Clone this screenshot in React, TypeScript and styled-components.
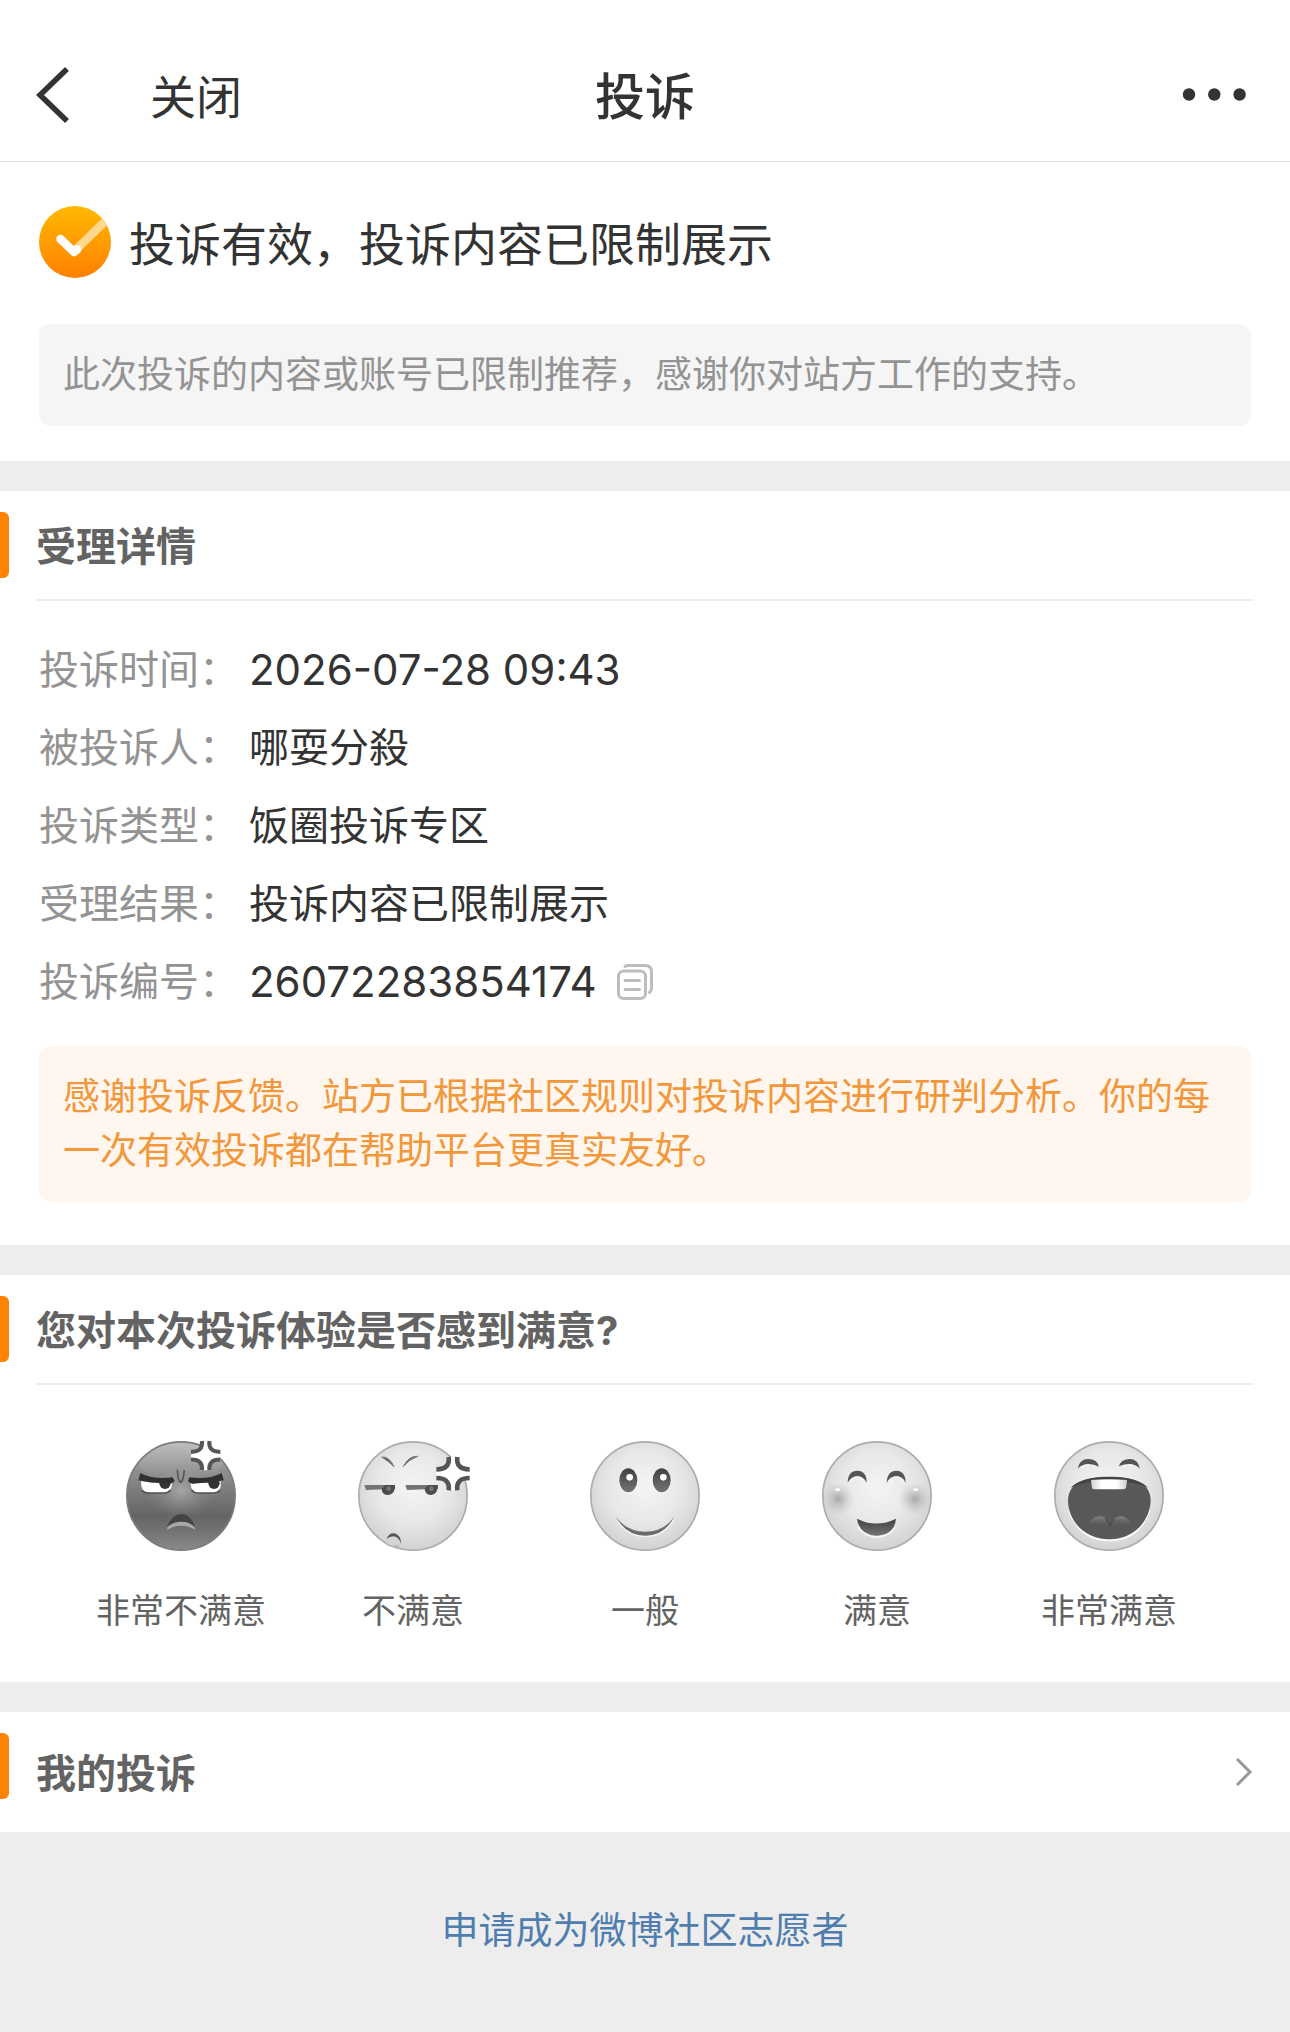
import React from 'react';
import styled, { createGlobalStyle } from 'styled-components';

const GlobalStyle = createGlobalStyle`
  *, *::before, *::after { box-sizing: border-box; }
  body {
    margin: 0;
    background: #ededed;
    color: #333;
    font-family: Inter, "Noto Sans CJK SC", sans-serif;
    font-size: 40px;
  }
  button { padding: 0; border: 0; background: none; color: inherit; font: inherit; cursor: pointer; }
  h1, h2, p, dl, dd, fieldset { margin: 0; padding: 0; border: 0; }
  svg { display: block; flex: none; overflow: visible; }
`;

const Page = styled.div`
  display: flex;
  flex-direction: column;
`;

const TopBar = styled.header`
  display: grid;
  grid-template-columns: 1fr auto 1fr;
  align-items: center;
  padding: 28px 36px 0;
  height: 162px;
  background: #fff;
  border-bottom: 1px solid #e0e0e0;
`;

const TopBarStart = styled.div`
  display: flex;
  align-items: center;
  gap: 80px;
`;

const CloseButton = styled.button`
  padding-top: 4px;
  font-size: 46px;
  line-height: 60px;
`;

const PageTitle = styled.h1`
  padding-top: 4px;
  font-size: 50px;
  font-weight: 500;
  line-height: 60px;
`;

const MoreButton = styled.button`
  justify-self: end;
`;

const Section = styled.section`
  margin-bottom: 30px;
  background: #fff;

  &:last-of-type { margin-bottom: 0; }
`;

const StatusSection = styled(Section)`
  padding: 44px 39px 35px;
`;

const StatusRow = styled.div`
  display: flex;
  align-items: center;
  gap: 18px;
  margin-bottom: 46px;
`;

const StatusText = styled.p`
  padding-top: 4px;
  font-size: 46px;
  line-height: 60px;
`;

const Notice = styled.p<{ $tone: 'neutral' | 'warm' }>`
  padding: 24px;
  border-radius: 12px;
  font-size: 37px;
  line-height: 54px;
  color: ${p => (p.$tone === 'warm' ? '#f2973a' : '#939393')};
  background: ${p => (p.$tone === 'warm' ? '#fff6ef' : '#f5f5f5')};
`;

const Marker = styled.span`
  align-self: flex-start;
  width: 9px;
  height: 66px;
  margin: 21px 27px 0 0;
  border-radius: 0 6px 6px 0;
  background: #ff8200;
`;

const SectionHead = styled.div`
  display: flex;
  align-items: center;
  height: 108px;
`;

const SectionTitle = styled.h2`
  padding-top: 4px;
  font-size: 40px;
  font-weight: 700;
  line-height: 60px;
  color: #636363;
`;

const Rule = styled.hr`
  height: 2px;
  margin: 0 36px;
  border: 0;
  background: #eee;
`;

const Details = styled.div`
  padding: 30px 39px 43px;
`;

const FieldList = styled.dl`
  margin-bottom: 25px;
`;

const Field = styled.div`
  display: flex;
  align-items: center;
  gap: 10px;
  line-height: 78px;
`;

const FieldName = styled.dt`
  width: 200px;
  color: #939393;
`;

const FieldValue = styled.dd<{ $numeric?: boolean }>`
  display: flex;
  align-items: center;
  gap: 20px;
  font-size: ${p => (p.$numeric ? 42 : 40)}px;
`;

const Ratings = styled.fieldset`
  display: grid;
  grid-template-columns: repeat(5, 1fr);
  padding: 56px 65px 47px;
`;

const Rating = styled.label`
  display: flex;
  flex-direction: column;
  align-items: center;
  gap: 36px;
  font-size: 34px;
  line-height: 48px;
  color: #636363;
  cursor: pointer;
`;

const RatingInput = styled.input`
  position: absolute;
  width: 1px;
  height: 1px;
  margin: 0;
  opacity: 0;
`;

const LinkRow = styled.a`
  display: flex;
  align-items: center;
  height: 120px;
  padding-right: 38px;
  text-decoration: none;

  svg { margin-left: auto; }
`;

const Footer = styled.footer`
  display: flex;
  justify-content: center;
  padding: 72px 39px;
`;

const FooterLink = styled.a`
  font-size: 37px;
  line-height: 54px;
  color: #507daf;
  text-decoration: none;
`;

const SharedDefs = styled.svg`
  position: absolute;
`;

const BackIcon = () => (
  <svg width="34" height="58" viewBox="0 0 34 58" fill="none" stroke="#333" strokeWidth="5.5">
    <path d="M31 3 4 29l27 26" />
  </svg>
);

const MoreIcon = () => (
  <svg width="72" height="14" viewBox="0 0 72 14" fill="#333">
    <circle cx="7" cy="6.5" r="6.2" />
    <circle cx="32.3" cy="6.5" r="6.2" />
    <circle cx="57.6" cy="6.5" r="6.2" />
  </svg>
);

const CheckIcon = () => (
  <svg width="72" height="72" viewBox="0 0 72 72">
    <defs>
      <linearGradient id="badge" x1="0" y1="0" x2="0" y2="1">
        <stop offset="0" stopColor="#ffb900" />
        <stop offset="1" stopColor="#ff8000" />
      </linearGradient>
      <clipPath id="badgeClip"><circle cx="36" cy="36" r="36" /></clipPath>
    </defs>
    <circle cx="36" cy="36" r="36" fill="url(#badge)" />
    <g clipPath="url(#badgeClip)" fill="none" strokeWidth="8.500">
      <path d="M37 43.500 70 11.500" stroke="#ffd890" />
      <path d="M21.500 33 35 46l3-2.500" stroke="#fff" strokeLinecap="round" strokeLinejoin="round" />
    </g>
  </svg>
);

const CopyIcon = () => (
  <svg width="36" height="36" viewBox="0 0 36 36" fill="none" stroke="#bdbdbd" strokeWidth="3" strokeLinecap="round">
    <rect x="1.5" y="7" width="27" height="27.5" rx="5" />
    <path d="M8 2.500Q9.500 1.500 12 1.500h16q6.500 0 6.500 6.500v16q0 3-2 4.500M8 16.500h14.500M8 25.500h14.500" />
  </svg>
);

const ArrowIcon = () => (
  <svg width="17" height="30" viewBox="0 0 17 30" fill="none" stroke="#999" strokeWidth="3">
    <path d="M2 2 15 15 2 28" />
  </svg>
);

const FaceDefs = () => (
  <SharedDefs width="0" height="0" aria-hidden="true">
    <defs>
      <radialGradient id="light" cx="0.5" cy="0.42" r="0.6">
        <stop offset="0" stopColor="#f4f4f4" />
        <stop offset="0.55" stopColor="#e8e8e8" />
        <stop offset="1" stopColor="#d0d0d0" />
      </radialGradient>
      <linearGradient id="dark" x1="0" y1="0" x2="0" y2="1">
        <stop offset="0" stopColor="#a9a9a9" />
        <stop offset="0.3" stopColor="#8c8c8c" />
        <stop offset="0.68" stopColor="#646464" />
        <stop offset="0.85" stopColor="#767676" />
        <stop offset="1" stopColor="#8a8a8a" />
      </linearGradient>
      <radialGradient id="darkGlow">
        <stop offset="0" stopColor="#b4b4b4" stopOpacity="0.75" />
        <stop offset="1" stopColor="#8c8c8c" stopOpacity="0" />
      </radialGradient>
      <linearGradient id="gloss" x1="0" y1="0" x2="0" y2="1">
        <stop offset="0" stopColor="#d0d0d0" stopOpacity="0.55" />
        <stop offset="1" stopColor="#b0b0b0" stopOpacity="0" />
      </linearGradient>
      <linearGradient id="ink" x1="0" y1="0" x2="0" y2="1">
        <stop offset="0" stopColor="#404040" />
        <stop offset="1" stopColor="#747474" />
      </linearGradient>
      <radialGradient id="blush">
        <stop offset="0" stopColor="#a2a2a2" stopOpacity="0.9" />
        <stop offset="1" stopColor="#c8c8c8" stopOpacity="0" />
      </radialGradient>
      <linearGradient id="tooth" x1="0" y1="0" x2="1" y2="0">
        <stop offset="0" stopColor="#d0d0d0" />
        <stop offset="0.3" stopColor="#fff" />
        <stop offset="0.7" stopColor="#fff" />
        <stop offset="1" stopColor="#d0d0d0" />
      </linearGradient>
      <linearGradient id="tongue" x1="0" y1="0" x2="0" y2="1">
        <stop offset="0" stopColor="#858585" />
        <stop offset="1" stopColor="#5c5c5c" stopOpacity="0" />
      </linearGradient>
      <clipPath id="head"><circle cx="165" cy="165" r="160" /></clipPath>
    </defs>
  </SharedDefs>
);

/* All faces share a 330-unit canvas with the head filling it. */
const Face = ({ dark = false, children }: { dark?: boolean; children: React.ReactNode }) => (
  <svg width="110" height="110" viewBox="0 0 330 330" fill="none" aria-hidden="true">
    <circle cx="165" cy="165" r="162.500" fill={dark ? 'url(#dark)' : 'url(#light)'} stroke={dark ? '#7c7c7c' : '#acacac'} strokeWidth="5" />
    {children}
  </svg>
);

const AngerMark = ({ x, y, size }: { x: number; y: number; size: number }) => (
  <g transform={`translate(${x} ${y}) scale(${size / 100})`}>
    <path d="M31 0H69L67 14Q71 31 100 33V67Q71 69 67 86L69 100H31L33 86Q29 69 0 67V33Q29 31 33 14Z" fill="#fff" />
    <g stroke="#555" strokeWidth="14">
      <path d="M37 0Q42 37 0 37M63 0Q58 37 100 37M37 100Q42 63 0 63M63 100Q58 63 100 63" />
    </g>
  </g>
);

const FuriousFace = () => (
  <Face dark>
    <ellipse cx="165" cy="150" rx="105" ry="85" fill="url(#darkGlow)" />
    <ellipse cx="165" cy="62" rx="128" ry="56" fill="url(#gloss)" clipPath="url(#head)" />
    <path d="M154 86Q156 122 164 124Q172 120 175 88" stroke="#555" strokeWidth="5" />
    <path d="M45 120Q90 130 138 124Q138 154 116 156H66Q44 154 45 120Z" fill="#fff" />
    <path d="M194 124Q240 130 284 120Q288 154 264 156H216Q194 154 194 124Z" fill="#fff" />
    <path d="M48 147Q54 156 68 156H114Q126 156 134 147M196 147Q203 156 216 156H262Q274 156 283 147" stroke="#505050" strokeWidth="5" />
    <circle cx="117" cy="127" r="17" fill="#333" />
    <circle cx="264" cy="127" r="17" fill="#333" />
    <path d="M43 96Q78 116 140 109L146 120Q136 132 112 127Q70 125 37 118Z" fill="#303030" />
    <path d="M287 96Q252 116 190 109L186 120Q194 132 216 127Q260 125 293 118Z" fill="#303030" />
    <path d="M123 257Q138 220 166 219Q195 220 207 257Q190 247 166 246Q140 247 123 257Z" fill="#444" />
    <path d="M124 259Q140 242 166 242Q192 242 206 259V266Q190 254 166 254Q140 254 124 267Z" fill="#a8a8a8" />
    <AngerMark x={195} y={0} size={88} />
  </Face>
);

const AnnoyedFace = () => (
  <Face>
    <path d="M71 48Q94 46 108 77Q92 61 71 48ZM179 46Q154 43 136 76Q152 56 179 46Z" fill="#666" stroke="#777" strokeWidth="3" />
    <path d="M19 132H111V143L24 147ZM142 132H240V143L147 147Z" fill="#747474" />
    <path d="M71 143Q72 162 91 162Q112 160 111 132H82ZM200 143Q202 162 220 162Q240 160 239 132H211Z" fill="#4c4c4c" />
    <circle cx="92" cy="143" r="7" fill="#777" />
    <circle cx="220" cy="143" r="7" fill="#777" />
    <path d="M86 298Q90 277 109 277Q128 280 130 310Q124 319 108 318Q88 320 83 307Z" fill="#d4d4d4" />
    <path d="M86 294Q92 276 109 277Q128 281 130 310Q122 286 106 286Q94 286 86 294Z" fill="#555" />
    <path d="M84 306Q95 320 124 314" stroke="#b8b8b8" strokeWidth="5" />
    <AngerMark x={235} y={48} size={100} />
  </Face>
);

const NeutralFace = () => (
  <Face>
    <ellipse cx="115" cy="121" rx="28" ry="37" fill="#f8f8f8" />
    <ellipse cx="215" cy="121" rx="28" ry="37" fill="#f8f8f8" />
    <ellipse cx="115" cy="118" rx="27" ry="36" fill="url(#ink)" />
    <ellipse cx="215" cy="118" rx="27" ry="36" fill="url(#ink)" />
    <circle cx="119" cy="109" r="10" fill="#fff" />
    <circle cx="220" cy="109" r="10" fill="#fff" />
    <path d="M83 238Q112 286 166 286T250 238" stroke="#f8f8f8" strokeWidth="4" />
    <path d="M78 228Q110 272 166 272T252 228Q224 284 166 284T78 228Z" fill="#6c6c6c" />
  </Face>
);

const HappyFace = () => (
  <Face>
    <g clipPath="url(#head)">
      <circle cx="48" cy="174" r="52" fill="url(#blush)" />
      <circle cx="279" cy="174" r="52" fill="url(#blush)" />
    </g>
    <ellipse cx="47" cy="146" rx="8" ry="4" fill="#fff" />
    <ellipse cx="281" cy="146" rx="8" ry="4" fill="#fff" />
    <path d="M77 125Q78 89 106 89T134 125Q124 106 106 106T77 125ZM194 125Q196 89 223 89T251 125Q242 106 223 106T194 125Z" fill="#555" />
    <path d="M88 124Q92 108 106 108T125 124M206 124Q210 108 223 108T242 124" stroke="#f8f8f8" strokeWidth="4" />
    <path d="M107 258Q130 288 164 288T220 258" stroke="#f8f8f8" strokeWidth="5" />
    <path d="M105 233Q163 262 222 233Q217 282 164 284Q112 282 105 233Z" fill="url(#ink)" />
  </Face>
);

const ThrilledFace = () => (
  <Face>
    <path d="M71 83Q76 54 103 54T135 77Q121 69 103 69T71 83ZM194 76Q202 54 227 54T258 83Q244 69 227 69T194 76Z" fill="#555" />
    <path d="M82 81Q90 71 104 72T126 79M205 79Q214 72 228 72T249 81" stroke="#f8f8f8" strokeWidth="3" />
    <path d="M44 206Q76 298 166 298T287 206" stroke="#fafafa" strokeWidth="6" />
    <path d="M42 180C42 130 82 107 166 107S290 130 290 180C286 248 232 295 166 295S44 248 42 180Z" fill="#585858" />
    <path d="M50 140Q80 108 166 108T282 140Q240 119 166 119T50 140Z" fill="#444" />
    <path d="M111 117Q165 113 219 117L216 140Q214 145 207 145H123Q115 145 114 140Z" fill="url(#tooth)" />
    <path d="M104 248Q116 226 136 226Q158 226 168 246Q180 226 202 226Q222 228 232 248Q200 262 170 252Q134 262 104 248Z" fill="url(#tongue)" />
    <path d="M154 233Q166 242 168 258Q171 242 182 233" stroke="#4c4c4c" strokeWidth="4" />
  </Face>
);

const fields = [
  { name: '投诉时间', value: '2026-07-28 09:43', numeric: true },
  { name: '被投诉人', value: '哪耍分殺' },
  { name: '投诉类型', value: '饭圈投诉专区' },
  { name: '受理结果', value: '投诉内容已限制展示' },
  { name: '投诉编号', value: '26072283854174', numeric: true, copyable: true },
];

const ratings = [
  { label: '非常不满意', Icon: FuriousFace },
  { label: '不满意', Icon: AnnoyedFace },
  { label: '一般', Icon: NeutralFace },
  { label: '满意', Icon: HappyFace },
  { label: '非常满意', Icon: ThrilledFace },
];

export default function App() {
  return (
    <Page lang="zh-CN">
      <GlobalStyle />
      <FaceDefs />
      <TopBar>
        <TopBarStart>
          <button type="button" aria-label="返回"><BackIcon /></button>
          <CloseButton type="button">关闭</CloseButton>
        </TopBarStart>
        <PageTitle>投诉</PageTitle>
        <MoreButton type="button" aria-label="更多"><MoreIcon /></MoreButton>
      </TopBar>
      <main>
        <StatusSection>
          <StatusRow>
            <CheckIcon />
            <StatusText>投诉有效，投诉内容已限制展示</StatusText>
          </StatusRow>
          <Notice $tone="neutral">此次投诉的内容或账号已限制推荐，感谢你对站方工作的支持。</Notice>
        </StatusSection>

        <Section>
          <SectionHead>
            <Marker />
            <SectionTitle>受理详情</SectionTitle>
          </SectionHead>
          <Rule />
          <Details>
            <FieldList>
              {fields.map(f => (
                <Field key={f.name}>
                  <FieldName>{f.name}：</FieldName>
                  <FieldValue $numeric={f.numeric}>
                    {f.value}
                    {f.copyable && <button type="button" aria-label="复制"><CopyIcon /></button>}
                  </FieldValue>
                </Field>
              ))}
            </FieldList>
            <Notice $tone="warm">感谢投诉反馈。站方已根据社区规则对投诉内容进行研判分析。你的每一次有效投诉都在帮助平台更真实友好。</Notice>
          </Details>
        </Section>

        <Section>
          <SectionHead>
            <Marker />
            <SectionTitle id="rating-title">您对本次投诉体验是否感到满意?</SectionTitle>
          </SectionHead>
          <Rule />
          <Ratings aria-labelledby="rating-title">
            {ratings.map(({ label, Icon }) => (
              <Rating key={label}>
                <RatingInput type="radio" name="rating" value={label} />
                <Icon />
                {label}
              </Rating>
            ))}
          </Ratings>
        </Section>

        <Section>
          <LinkRow href="#complaints">
            <Marker />
            <SectionTitle>我的投诉</SectionTitle>
            <ArrowIcon />
          </LinkRow>
        </Section>
      </main>
      <Footer>
        <FooterLink href="#volunteer">申请成为微博社区志愿者</FooterLink>
      </Footer>
    </Page>
  );
}
